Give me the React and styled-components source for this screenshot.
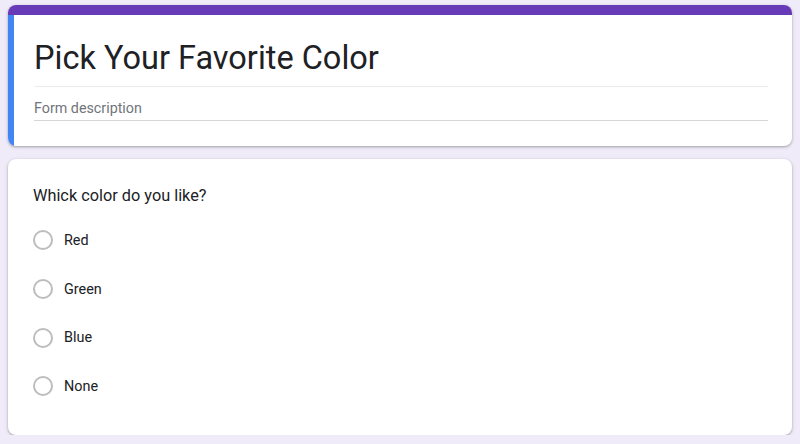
import React from 'react';
import styled, { createGlobalStyle } from 'styled-components';

const GlobalStyle = createGlobalStyle`
  html, body {
    margin: 0;
    background: #f0ebf8;
  }
  body {
    padding: 5px 8px 0;
    font-family: Roboto, "Liberation Sans", Arial, sans-serif;
    color: #202124;
  }
`;

const options = ['Red', 'Green', 'Blue', 'None'];

function App() {
  return (
    <>
      <GlobalStyle />
      <Page>
        <HeaderCard>
          <TopBar />
          <HeaderBody>
            <Title>Pick Your Favorite Color</Title>
            <Description>Form description</Description>
          </HeaderBody>
        </HeaderCard>

        <QuestionCard>
          <Question>Whick color do you like?</Question>
          <OptionList>
            {options.map((o) => (
              <Option key={o}>
                <Radio />
                <OptionLabel>{o}</OptionLabel>
              </Option>
            ))}
          </OptionList>
        </QuestionCard>
      </Page>
    </>
  );
}

const Page = styled.div`
  display: flex;
  flex-direction: column;
  gap: 13px;
`;

const Card = styled.div`
  background: #fff;
  border-radius: 8px;
  box-shadow: 0 1px 2px 0 rgba(60, 64, 67, 0.3), 0 1px 3px 1px rgba(60, 64, 67, 0.12);
`;

const HeaderCard = styled(Card)`
  overflow: hidden;
`;

const TopBar = styled.div`
  height: 10px;
  background: #673ab7;
`;

const HeaderBody = styled.div`
  border-left: 6px solid #4285f4;
  padding: 23px 24px 25px 20px;
`;

const Title = styled.h1`
  margin: 0;
  font-size: 32.5px;
  font-weight: 400;
  line-height: 40px;
  color: #202124;
  padding-bottom: 8px;
  border-bottom: 1px solid #ececec;
`;

const Description = styled.div`
  margin-top: 11px;
  font-size: 14.3px;
  line-height: 20px;
  color: #70757a;
  padding-bottom: 2px;
  border-bottom: 1px solid #d6d6d6;
`;

const QuestionCard = styled(Card)`
  padding: 25px 24px 24px 25px;
`;

const Question = styled.div`
  font-size: 16.3px;
  line-height: 24px;
  color: #202124;
`;

const OptionList = styled.div`
  margin-top: 8px;
  display: flex;
  flex-direction: column;
`;

const Option = styled.div`
  display: flex;
  align-items: center;
  height: 48.7px;
`;

const Radio = styled.span`
  box-sizing: border-box;
  width: 20px;
  height: 20px;
  border-radius: 50%;
  border: 2px solid #bdbdbd;
  margin-right: 11px;
  flex-shrink: 0;
`;

const OptionLabel = styled.span`
  font-size: 14.4px;
  color: #202124;
`;

export default App;
